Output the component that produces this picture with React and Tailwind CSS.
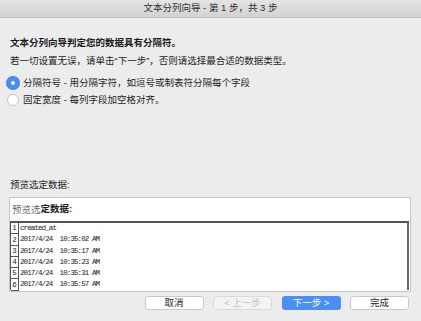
import React from "react";

const rows = [
  "created_at",
  "2017/4/24  10:35:02 AM",
  "2017/4/24  10:35:17 AM",
  "2017/4/24  10:35:23 AM",
  "2017/4/24  10:35:31 AM",
  "2017/4/24  10:35:57 AM",
];

const cjk = "font-['Helvetica','Noto_Sans_CJK_SC',sans-serif]";

const Radio = ({ checked, label }) => (
  <div className="flex items-center h-[14px]">
    {checked ? (
      <span className="w-[12px] h-[12px] rounded-full bg-[#4a8df6] flex items-center justify-center ml-[-3px] shadow-[0_0_0_1px_#3f7fe6]">
        <span className="w-[4px] h-[4px] rounded-full bg-white" />
      </span>
    ) : (
      <span className="w-[12px] h-[12px] rounded-full bg-white border border-[#c4c4c4] ml-[-3px]" />
    )}
    <span className="ml-[4px] text-[9.5px] text-[#1e1e1e] leading-[14px]">{label}</span>
  </div>
);

const Button = ({ children, variant }) => {
  const base = "w-[59px] h-[14px] rounded-[3px] flex items-center justify-center text-[9.5px] leading-none";
  if (variant === "primary")
    return <div className={`${base} bg-[#4b8ef6] text-white`}>{children}</div>;
  if (variant === "disabled")
    return (
      <div className={`${base} bg-[#f3f3f3] border border-[#dadada] text-[#c4c4c4]`}>{children}</div>
    );
  return (
    <div className={`${base} bg-white border border-[#c9c9c9] text-[#1e1e1e]`}>{children}</div>
  );
};

export default function App() {
  return (
    <div className={`w-[421px] h-[321px] bg-[#ececec] overflow-hidden flex flex-col ${cjk}`}>
      <div className="h-[18px] shrink-0 bg-gradient-to-b from-[#e4e4e4] to-[#d2d2d2] border-b border-[#c2c2c2] flex items-center justify-center text-[9.5px] text-[#2e2e2e]">
        文本分列向导 - 第 1 步，共 3 步
      </div>

      <div className="px-[10px] flex flex-col">
        <div className="mt-[18px] text-[9.5px] leading-[14px] font-bold text-[#1a1a1a]">
          文本分列向导判定您的数据具有分隔符。
        </div>
        <div className="mt-[4px] text-[9.5px] leading-[14px] text-[#1e1e1e]">
          若一切设置无误，请单击“下一步”，否则请选择最合适的数据类型。
        </div>

        <div className="mt-[8px] flex flex-col gap-[3px]">
          <Radio checked label="分隔符号 - 用分隔字符，如逗号或制表符分隔每个字段" />
          <Radio label="固定宽度 - 每列字段加空格对齐。" />
        </div>

        <div className="mt-[71px] text-[9.5px] leading-[14px] text-[#1e1e1e]">预览选定数据:</div>
      </div>

      <div className="mx-[9px] mt-[5px] w-[402px] h-[95px] bg-white border border-[#c6c6c6] flex flex-col">
        <div className="h-[23px] pl-[2px] flex items-center text-[9.5px] text-[#1e1e1e]">
          <span className="font-['Noto_Sans_CJK_SC',serif] font-light">预览选</span>
          <span className="font-bold">定数据:</span>
        </div>
        <div className="h-[69px] mr-[1px] border-t-2 border-l border-r-2 border-[#555] border-r-[#666] flex flex-col">
          {rows.map((r, i) => (
            <div key={i} className="h-[11.5px] flex items-stretch">
              <div className="w-[8px] shrink-0 border-r border-b border-[#555] flex items-end justify-center font-['Liberation_Mono',monospace] text-[7.5px] leading-[9px] text-[#222]">
                {i + 1}
              </div>
              <div className="pl-[1px] flex items-center font-['Liberation_Mono',monospace] text-[7.5px] tracking-[-0.9px] text-[#1a1a1a] whitespace-pre">
                {r}
              </div>
            </div>
          ))}
        </div>
      </div>

      <div className="mt-[4px] mr-[12px] flex justify-end gap-[9.5px]">
        <Button>取消</Button>
        <Button variant="disabled">&lt; 上一步</Button>
        <Button variant="primary">下一步 &gt;</Button>
        <Button>完成</Button>
      </div>
    </div>
  );
}
